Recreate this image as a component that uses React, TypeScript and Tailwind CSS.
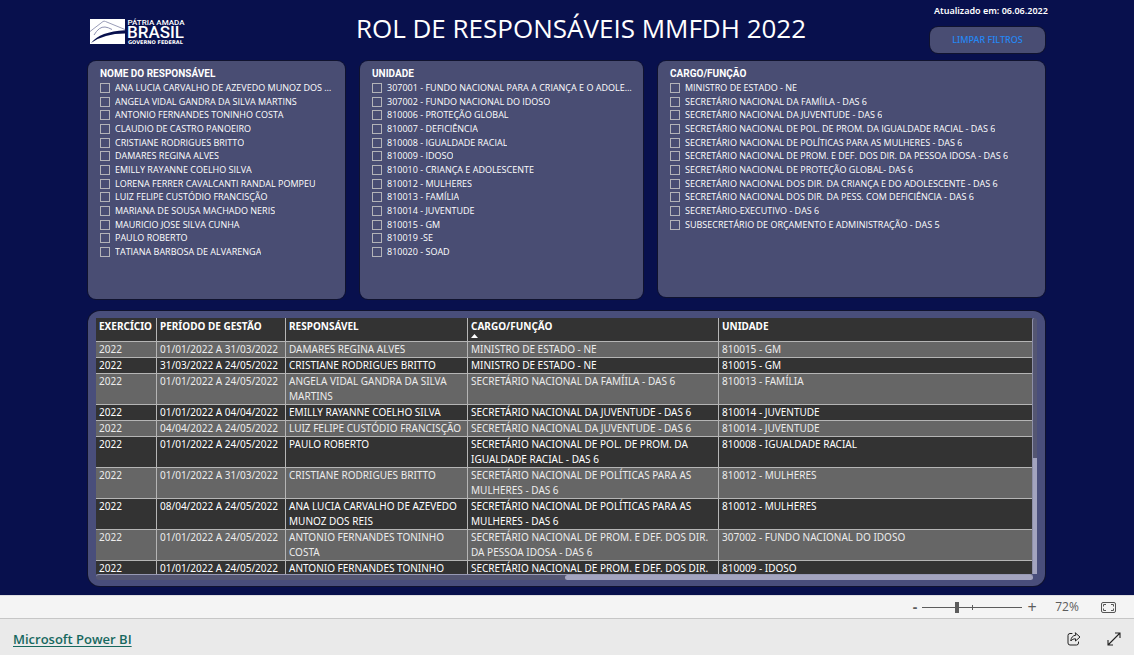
import React, { useState } from 'react';
import clsx from 'clsx';

const responsaveis = [
    'ANA LUCIA CARVALHO DE AZEVEDO MUNOZ DOS REIS',
    'ANGELA VIDAL GANDRA DA SILVA MARTINS',
    'ANTONIO FERNANDES TONINHO COSTA',
    'CLAUDIO DE CASTRO PANOEIRO',
    'CRISTIANE RODRIGUES BRITTO',
    'DAMARES REGINA ALVES',
    'EMILLY RAYANNE COELHO SILVA',
    'LORENA FERRER CAVALCANTI RANDAL POMPEU',
    'LUIZ FELIPE CUSTÓDIO FRANCISÇÃO',
    'MARIANA DE SOUSA MACHADO NERIS',
    'MAURICIO JOSE SILVA CUNHA',
    'PAULO ROBERTO',
    'TATIANA BARBOSA DE ALVARENGA',
];

const unidades = [
    '307001 - FUNDO NACIONAL PARA A CRIANÇA E O ADOLESCENTE',
    '307002 - FUNDO NACIONAL DO IDOSO',
    '810006 - PROTEÇÃO GLOBAL',
    '810007 - DEFICIÊNCIA',
    '810008 - IGUALDADE RACIAL',
    '810009 - IDOSO',
    '810010 - CRIANÇA E ADOLESCENTE',
    '810012 - MULHERES',
    '810013 - FAMÍLIA',
    '810014 - JUVENTUDE',
    '810015 - GM',
    '810019 -SE',
    '810020 - SOAD',
];

const cargos = [
    'MINISTRO DE ESTADO - NE',
    'SECRETÁRIO NACIONAL DA FAMÍILA - DAS 6',
    'SECRETÁRIO NACIONAL DA JUVENTUDE - DAS 6',
    'SECRETÁRIO NACIONAL DE POL. DE PROM. DA IGUALDADE RACIAL - DAS 6',
    'SECRETÁRIO NACIONAL DE POLÍTICAS PARA AS MULHERES - DAS 6',
    'SECRETÁRIO NACIONAL DE PROM. E DEF. DOS DIR. DA PESSOA IDOSA - DAS 6',
    'SECRETÁRIO NACIONAL DE PROTEÇÃO GLOBAL- DAS 6',
    'SECRETÁRIO NACIONAL DOS DIR. DA CRIANÇA E DO ADOLESCENTE - DAS 6',
    'SECRETÁRIO NACIONAL DOS DIR. DA PESS. COM DEFICIÊNCIA - DAS 6',
    'SECRETÁRIO-EXECUTIVO - DAS 6',
    'SUBSECRETÁRIO DE ORÇAMENTO E ADMINISTRAÇÃO - DAS 5',
];

const columns = ['EXERCÍCIO', 'PERÍODO DE GESTÃO', 'RESPONSÁVEL', 'CARGO/FUNÇÃO', 'UNIDADE'];

const rows = [
    ['2022', '01/01/2022 A 31/03/2022', 'DAMARES REGINA ALVES', 'MINISTRO DE ESTADO - NE', '810015 - GM'],
    ['2022', '31/03/2022 A 24/05/2022', 'CRISTIANE RODRIGUES BRITTO', 'MINISTRO DE ESTADO - NE', '810015 - GM'],
    ['2022', '01/01/2022 A 24/05/2022', 'ANGELA VIDAL GANDRA DA SILVA MARTINS', 'SECRETÁRIO NACIONAL DA FAMÍILA - DAS 6', '810013 - FAMÍLIA'],
    ['2022', '01/01/2022 A 04/04/2022', 'EMILLY RAYANNE COELHO SILVA', 'SECRETÁRIO NACIONAL DA JUVENTUDE - DAS 6', '810014 - JUVENTUDE'],
    ['2022', '04/04/2022 A 24/05/2022', 'LUIZ FELIPE CUSTÓDIO FRANCISÇÃO', 'SECRETÁRIO NACIONAL DA JUVENTUDE - DAS 6', '810014 - JUVENTUDE'],
    ['2022', '01/01/2022 A 24/05/2022', 'PAULO ROBERTO', 'SECRETÁRIO NACIONAL DE POL. DE PROM. DA IGUALDADE RACIAL - DAS 6', '810008 - IGUALDADE RACIAL'],
    ['2022', '01/01/2022 A 31/03/2022', 'CRISTIANE RODRIGUES BRITTO', 'SECRETÁRIO NACIONAL DE POLÍTICAS PARA AS MULHERES - DAS 6', '810012 - MULHERES'],
    ['2022', '08/04/2022 A 24/05/2022', 'ANA LUCIA CARVALHO DE AZEVEDO MUNOZ DOS REIS', 'SECRETÁRIO NACIONAL DE POLÍTICAS PARA AS MULHERES - DAS 6', '810012 - MULHERES'],
    ['2022', '01/01/2022 A 24/05/2022', 'ANTONIO FERNANDES TONINHO COSTA', 'SECRETÁRIO NACIONAL DE PROM. E DEF. DOS DIR. DA PESSOA IDOSA - DAS 6', '307002 - FUNDO NACIONAL DO IDOSO'],
    ['2022', '01/01/2022 A 24/05/2022', 'ANTONIO FERNANDES TONINHO COSTA', 'SECRETÁRIO NACIONAL DE PROM. E DEF. DOS DIR. DA PESSOA IDOSA - DAS 6', '810009 - IDOSO'],
];

function Logo() {
    return (
        <svg viewBox="0 0 96 28" className="w-24 h-7" role="img" aria-label="Pátria Amada Brasil - Governo Federal">
            <rect x="0" y="2" width="35" height="25" fill="#fff" />
            <path d="M0 14.500 L13 4.500 Q14 3.800 15.500 4.500 L35 12.500" fill="none" stroke="#9a9db8" strokeWidth="1" />
            <path d="M4 18 Q9 9.500 15 10 Q18 10.300 22 12.500" fill="none" stroke="#8d90b0" strokeWidth="1" />
            <path d="M1 26 Q10 14.500 35 13.200 L35 16.500 Q14 16.500 1 26Z" fill="#08104d" />
            <text x="37.500" y="7.500" fill="#fff" fontSize="8" fontWeight="500" fontFamily="Roboto, sans-serif">PÁTRIA AMADA</text>
            <text x="37" y="21" fill="#fff" fontSize="17" fontWeight="500" fontFamily="Roboto, sans-serif">BRASIL</text>
            <text x="38" y="27" fill="#fff" fontSize="5" fontWeight="700" fontFamily="'DejaVu Sans', sans-serif">GOVERNO FEDERAL</text>
        </svg>
    );
}

type FilterPanelProps = {
    title: string;
    items: string[];
    className?: string;
};

function FilterPanel({ title, items, className }: FilterPanelProps) {
    return (
        <fieldset className={clsx('min-w-0 rounded-lg bg-[#494d73] px-3 pt-[5px] shadow-[0_0_0_1px_#10132f]', className)}>
            <legend className="float-left w-full font-[Roboto,sans-serif] text-[10px] leading-[15px] font-bold text-white">
                {title}
            </legend>
            <ul className="clear-both grid h-[178px] grid-rows-13">
                {items.map((item) => (
                    <li key={item} className="min-h-0 min-w-0">
                        <label className="flex h-full items-center gap-[5px] text-[9px] leading-[14px] text-white">
                            <input
                                type="checkbox"
                                className="size-[10px] shrink-0 appearance-none border border-[#b3b3b8] checked:bg-white"
                            />
                            <span className="-mr-[2px] truncate">{item}</span>
                        </label>
                    </li>
                ))}
            </ul>
        </fieldset>
    );
}

function ManagersTable() {
    return (
        <section className="rounded-xl bg-[#494e7b] px-2 pt-[7px] pb-[6px] shadow-[0_0_0_1px_#10132f]">
            <div className="flex h-64">
                <div className="min-w-0 flex-1 overflow-hidden">
                    <table className="w-full table-fixed border-separate border-spacing-0 text-left font-['Noto_Sans',sans-serif] text-[10px] leading-[15px]">
                        <colgroup>
                            <col className="w-[61px]" />
                            <col className="w-[129px]" />
                            <col className="w-[182px]" />
                            <col className="w-[251px]" />
                            <col />
                        </colgroup>
                        <thead>
                            <tr className="bg-[#333] text-white">
                                {columns.map((column) => (
                                    <th
                                        key={column}
                                        aria-sort={column === 'CARGO/FUNÇÃO' ? 'ascending' : undefined}
                                        className="h-6 border-r border-b border-[#b5b5b5] px-[3px] pt-px align-top font-bold whitespace-nowrap last:border-r-0"
                                    >
                                        {column}
                                        {column === 'CARGO/FUNÇÃO' && (
                                            <svg viewBox="0 0 7 4" className="h-1 w-[7px]" fill="#fff">
                                                <path d="M0 4 L3.500 0 L7 4Z" />
                                            </svg>
                                        )}
                                    </th>
                                ))}
                            </tr>
                        </thead>
                        <tbody>
                            {rows.map((row, i) => (
                                <tr key={i} className="text-[#ececec] odd:bg-[#666] even:bg-[#333] even:text-white">
                                    {row.map((cell, j) => (
                                        <td
                                            key={j}
                                            className={clsx(
                                                'border-r border-b border-[#b5b5b5] px-[3px] align-top last:border-r-0',
                                                j === 1 && 'whitespace-nowrap'
                                            )}
                                        >
                                            {cell}
                                        </td>
                                    ))}
                                </tr>
                            ))}
                        </tbody>
                    </table>
                </div>
                <div className="flex w-[5px] flex-col rounded-t-sm border-l border-[#8d8fa8] bg-[#545672]">
                    <div className="mt-auto h-[116px] bg-[#a3a4bf]" />
                </div>
            </div>
            <div className="mr-1 flex h-[6px] rounded-full border-t border-[#9799b4] bg-[#545672]">
                <div className="ml-auto w-1/2 rounded-full bg-[#a3a4bf]" />
            </div>
        </section>
    );
}

function ZoomBar() {
    const [zoom, setZoom] = useState(34);

    return (
        <div className="flex h-6 items-center justify-end border-t border-b border-t-[#dedee2] border-b-[#c6c6c6] bg-[#f4f4f4] pr-[18px] text-[#5c5c5c]">
            <button type="button" aria-label="Reduzir" className="w-[14px] text-sm leading-4 font-bold" onClick={() => setZoom(zoom - 5)}>
                -
            </button>
            <div className="relative flex h-4 items-center">
                <input
                    type="range"
                    aria-label="Zoom"
                    value={zoom}
                    onChange={(e) => setZoom(Number(e.target.value))}
                    className="h-px w-[100px] appearance-none bg-[#5c5c5c] [&::-webkit-slider-thumb]:h-[11px] [&::-webkit-slider-thumb]:w-1 [&::-webkit-slider-thumb]:appearance-none [&::-webkit-slider-thumb]:bg-[#5c5c5c]"
                />
                <span className="pointer-events-none absolute top-[6px] left-1/2 h-[5px] w-px bg-[#5c5c5c]" />
            </div>
            <button type="button" aria-label="Ampliar" className="w-5 text-base leading-4" onClick={() => setZoom(zoom + 5)}>
                +
            </button>
            <span className="ml-[10px] w-[30px] text-center text-xs leading-4">72%</span>
            <button type="button" aria-label="Ajustar à página" className="ml-[19px]">
                <svg viewBox="0 0 15 11" className="h-[11px] w-[15px]" fill="none" stroke="#555">
                    <rect x=".5" y=".5" width="14" height="10" rx="1.500" />
                    <path d="M5 2.500H2.500V4.500M2.500 6.500V8.500H5M10 2.500H12.500V4.500M12.500 6.500V8.500H10" />
                </svg>
            </button>
        </div>
    );
}

export default function App() {
    return (
        <div className="flex min-h-screen flex-col bg-[#eaeaea] font-['Open_Sans',sans-serif]">
            <main className="grow bg-[#08104d] pr-[89px] pb-[9px] pl-[88px]">
                <header className="flex h-[61px]">
                    <div className="w-36 shrink-0 pt-[17px] pl-[2px]">
                        <Logo />
                    </div>
                    <h1 className="flex-1 pt-[10px] text-center text-[26px] leading-9 whitespace-nowrap text-white">
                        ROL DE RESPONSÁVEIS MMFDH 2022
                    </h1>
                    <div className="w-[115px] shrink-0 pt-[3px] font-['Noto_Sans',sans-serif] text-[9px] font-medium">
                        <p className="pl-1 leading-4 font-semibold whitespace-nowrap text-white">Atualizado em: 06.06.2022</p>
                        <button
                            type="button"
                            className="mt-2 h-[26px] w-full rounded-lg bg-[#494d73] text-[#2488f5] shadow-[0_0_0_1px_#10132f]"
                        >
                            LIMPAR FILTROS
                        </button>
                    </div>
                </header>

                <div className="grid grid-cols-[257fr_283fr_387fr] items-start gap-[15px]">
                    <FilterPanel title="NOME DO RESPONSÁVEL" items={responsaveis} className="pb-10" />
                    <FilterPanel title="UNIDADE" items={unidades} className="pb-10" />
                    <FilterPanel title="CARGO/FUNÇÃO" items={cargos} className="pb-[38px]" />
                </div>

                <div className="mt-3">
                    <ManagersTable />
                </div>
            </main>

            <ZoomBar />

            <footer className="flex h-9 items-center justify-between pt-[3px] pr-[13px] pl-[13px]">
                <a href="https://powerbi.microsoft.com" className="text-[13px] leading-5 font-semibold text-[#17685f] underline underline-offset-2">
                    Microsoft Power BI
                </a>
                <div className="flex items-center gap-[26px] text-[#222]">
                    <button type="button" aria-label="Compartilhar">
                        <svg viewBox="0 0 14 14" className="size-[14px]" fill="none" stroke="currentColor" strokeLinejoin="round" strokeLinecap="round">
                            <path d="M5 1.500H3A2 2 0 0 0 1 3.500V11A2 2 0 0 0 3 13H9.500A2 2 0 0 0 11.500 11V10" />
                            <path d="M8.500 1L13 5L8.500 9V6.800C6.500 6.800 5 7.500 3.800 9C4 5.500 5.800 3.500 8.500 3.200Z" />
                        </svg>
                    </button>
                    <button type="button" aria-label="Tela inteira">
                        <svg viewBox="0 0 14 14" className="size-[14px]" fill="none" stroke="currentColor" strokeWidth="1.100">
                            <path d="M1 13L13 1M8 1H13V6M1 8V13H6" />
                        </svg>
                    </button>
                </div>
            </footer>
        </div>
    );
}
